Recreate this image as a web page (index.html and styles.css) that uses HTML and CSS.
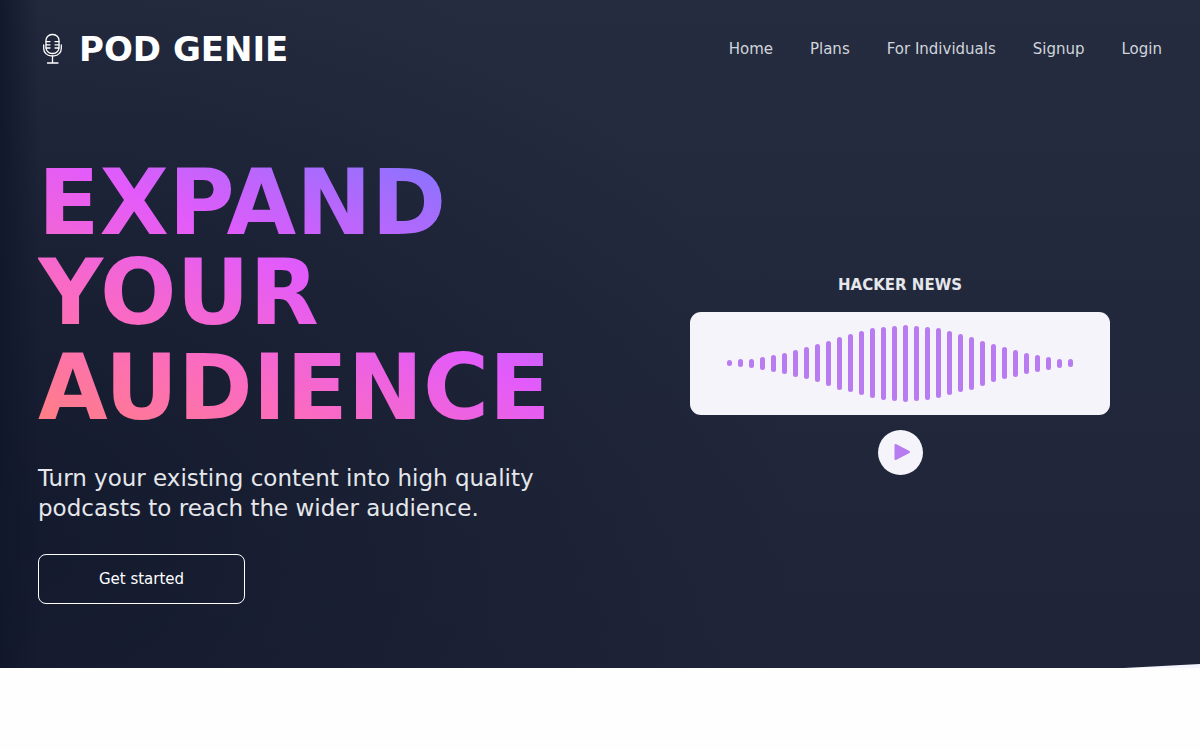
FILE: index.html
```html
<!DOCTYPE html>
<html lang="en">

<head>
  <meta charset="UTF-8">
  <meta name="viewport" content="width=device-width, initial-scale=1.0">
  <title>Pod Genie</title>
  <link rel="stylesheet" href="styles.css">
</head>

<body>
  <div class="hero">
    <header class="header">
      <a class="logo" href="#">
        <svg class="logo-icon" viewBox="0 0 30 34" fill="none" stroke="currentColor" stroke-width="1.3" stroke-linecap="round" aria-hidden="true">
          <rect x="8" y="2.5" width="13" height="19" rx="6" />
          <path d="M5.7 13v3.5a7.3 7.3 0 0 0 7.3 7.3h3a7.3 7.3 0 0 0 7.3-7.3v-3.5" />
          <path d="M8 9.6h4M8 12.8h4M8 16h4M17 9.6h4M17 12.8h4M17 16h4" />
          <path d="M14.5 24v7M9.5 31h10.5" />
        </svg>
        <span>POD GENIE</span>
      </a>
      <nav class="nav">
        <a href="#">Home</a>
        <a href="#">Plans</a>
        <a href="#">For Individuals</a>
        <a href="#">Signup</a>
        <a href="#">Login</a>
      </nav>
    </header>

    <main class="content">
      <section class="intro">
        <h1>EXPAND YOUR <span class="word">AUDIENCE</span></h1>
        <p>Turn your existing content into high quality podcasts to reach the wider audience.</p>
        <button type="button" class="start">Get started</button>
      </section>

      <section class="player">
        <h2>HACKER NEWS</h2>
        <div class="wave" id="wave"></div>
        <button type="button" class="play" aria-label="Play">
          <svg viewBox="0 0 18 18" aria-hidden="true">
            <path d="M2.5 2v14L16 9z" fill="currentColor" stroke="currentColor" stroke-width="2" stroke-linejoin="round" />
          </svg>
        </button>
      </section>
    </main>
  </div>

  <script>
    const levels = [6, 8, 9, 13, 17, 21, 27, 32, 38, 45, 53, 58, 64, 70, 73, 75, 77,
      75, 73, 70, 64, 58, 53, 45, 38, 32, 27, 21, 17, 13, 9, 8];
    const wave = document.getElementById('wave');

    levels.forEach(level => {
      const bar = document.createElement('span');
      bar.className = 'bar';
      bar.style.height = `${level}px`;
      wave.appendChild(bar);
    });
  </script>
</body>

</html>
```
FILE: styles.css
```css
body {
  margin: 0;
  background-color: #fefefe;
  font-family: "DejaVu Sans", sans-serif;
  font-size: 15px;
}

a {
  color: inherit;
  text-decoration: none;
}

.hero {
  position: relative;
  background:
    linear-gradient(to right, rgba(17, 23, 43, 0.9), rgba(17, 23, 43, 0) 40px),
    radial-gradient(ellipse 800px 640px at 0 80%, rgba(17, 23, 43, 0.8), rgba(17, 23, 43, 0.4) 50%, rgba(17, 23, 43, 0)),
    linear-gradient(to bottom, #252c3f, #1f2438);
}

/* slanted edge of the next section */
.hero::after {
  content: "";
  position: absolute;
  right: 0;
  bottom: 0;
  width: 76px;
  height: 4px;
  background-color: #f5f5ff;
  clip-path: polygon(0 100%, 100% 0, 100% 100%);
}

.header {
  display: flex;
  align-items: center;
  justify-content: space-between;
  height: 97px;
  padding: 0 38px;
}

.logo {
  display: flex;
  align-items: center;
  gap: 11px;
  color: #fff;
  font-size: 34px;
  font-weight: bold;
}

.logo-icon {
  width: 30px;
  height: 34px;
}

.nav {
  display: flex;
  gap: 37px;
  color: #d1d5db;
}

.content {
  display: grid;
  grid-template-columns: 1fr 1fr;
  align-items: center;
  padding: 61px 0 64px;
}

.intro {
  padding-left: 38px;
}

.intro h1 {
  margin: 0;
  font-size: 90px;
  line-height: 90px;
  color: transparent;
  background: linear-gradient(to top right, #ff8080, #fb6bc0 27%, #e35bfa 52%, #7878ff 90%);
  -webkit-background-clip: text;
  background-clip: text;
}

.intro .word {
  display: block;
  padding-top: 5px;
}

.intro p {
  max-width: 510px;
  margin: 30px 0 31px;
  color: #e5e7eb;
  font-size: 23px;
  line-height: 30px;
}

.start {
  display: block;
  width: 207px;
  height: 50px;
  border: 1px solid #fff;
  border-radius: 8px;
  background: none;
  color: #fff;
  font: inherit;
  cursor: pointer;
}

.player {
  display: flex;
  flex-direction: column;
  align-items: center;
  gap: 15px;
  padding-bottom: 15px;
}

.player h2 {
  margin: 0;
  color: #e5e7eb;
  font-size: 15px;
  line-height: 24px;
}

.wave {
  display: flex;
  align-items: center;
  justify-content: center;
  gap: 6px;
  width: 70%;
  height: 103px;
  border-radius: 11px;
  background-color: #f5f4fa;
}

.bar {
  width: 5px;
  border-radius: 3px;
  background-color: #b87bf0;
}

.play {
  display: flex;
  align-items: center;
  justify-content: center;
  width: 45px;
  height: 45px;
  padding: 0 0 0 4px;
  border: none;
  border-radius: 50%;
  background-color: #f5f4fa;
  color: #b87bf0;
  cursor: pointer;
}

.play svg {
  width: 18px;
  height: 18px;
}
```
